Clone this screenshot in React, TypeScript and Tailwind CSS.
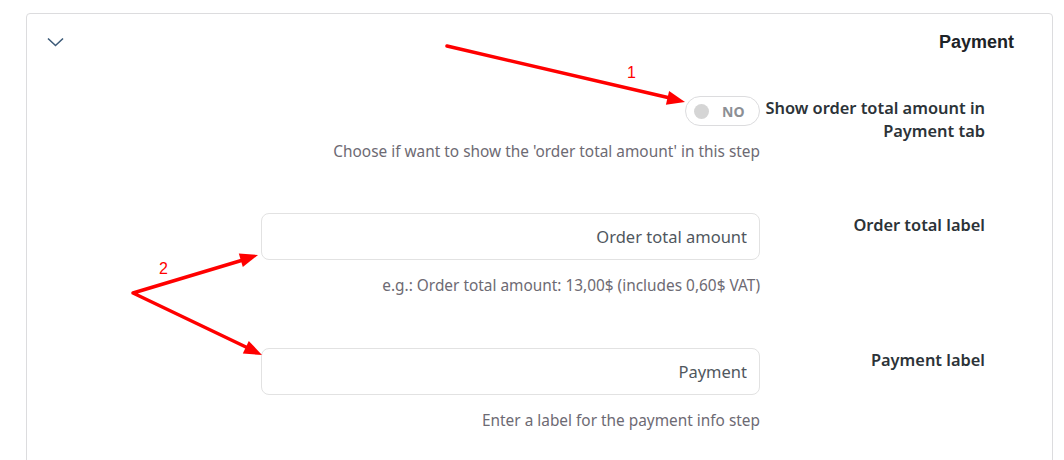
import React from 'react';

const font = "font-['Noto_Sans','Open_Sans',sans-serif]";

const Row: React.FC<{ label: React.ReactNode; children: React.ReactNode; className?: string }> = ({
  label,
  children,
  className = '',
}) => (
  <div className={`flex justify-end gap-[3px] ${className}`}>
    <div className="w-[499px] flex flex-col items-end">{children}</div>
    <div className="w-[222px] text-right text-[16.4px] leading-[23px] font-semibold text-[#2c3338] whitespace-nowrap">
      {label}
    </div>
  </div>
);

const Help: React.FC<{ children: React.ReactNode; className?: string }> = ({ children, className = '' }) => (
  <p className={`text-[15.4px] leading-[20px] text-[#6d6a73] text-right ${className}`}>{children}</p>
);

const TextInput: React.FC<{ value: string }> = ({ value }) => (
  <input
    defaultValue={value}
    className={`w-full h-[47px] rounded-[8px] border border-[#e2e2e2] bg-white pr-[12px] text-right text-[16.5px] text-[#50575e] outline-none ${font}`}
  />
);

// red annotation arrows drawn over the page
const Annotations: React.FC = () => (
  <svg className="absolute inset-0 pointer-events-none" width="1064" height="460">
    <g stroke="#ff0000" strokeWidth="3.5" strokeLinecap="round" fill="none">
      <line x1="447" y1="46" x2="670" y2="98" />
      <polyline points="243,260 133,293 248,348" strokeLinejoin="round" />
    </g>
    <g fill="#ff0000">
      <polygon points="685,102 665.9,104.7 669.1,91.1" />
      <polygon points="258,255 242.8,266.9 238.8,253.5" />
      <polygon points="262,355 242.8,353.5 248.8,340.9" />
    </g>
    <g fill="#ff0000" fontFamily="'Liberation Sans', sans-serif" fontSize="16">
      <text x="627" y="78">1</text>
      <text x="159" y="274">2</text>
    </g>
  </svg>
);

const App: React.FC = () => {
  return (
    <div className={`relative w-[1064px] h-[460px] overflow-hidden bg-white ${font}`}>
      <div className="ml-[26px] mt-[13px] w-[1027px] h-[520px] rounded-[4px] border border-[#dcdcde] bg-white">
        <div className="flex items-center justify-between h-[56px] pl-[20px] pr-[38px]">
          <svg width="17" height="10" viewBox="0 0 17 10" fill="none">
            <path d="M1 1.5 L8.5 8.5 L16 1.5" stroke="#3c5a78" strokeWidth="1.6" />
          </svg>
          <h2 className="font-['Liberation_Sans',Arial,sans-serif] font-bold text-[18px] text-[#1d2327]">Payment</h2>
        </div>

        <div className="pr-[67px] pt-[26px]">
          <Row
            label={
              <>
                Show order total amount in
                <br />
                Payment tab
              </>
            }
          >
            <button className="flex items-center w-[75px] h-[30px] rounded-full border border-[#dcdcde] bg-white pl-[8px]">
              <span className="w-[15px] h-[15px] rounded-full bg-[#d5d5d5]" />
              <span className="ml-[13px] text-[14px] font-bold text-[#8c8f94]">NO</span>
            </button>
            <Help className="mt-[16px]">Choose if want to show the 'order total amount' in this step</Help>
          </Row>

          <Row label="Order total label" className="mt-[51px]">
            <TextInput value="Order total amount" />
            <Help className="mt-[16px]">e.g.: Order total amount: 13,00$ (includes 0,60$ VAT)</Help>
          </Row>

          <Row label="Payment label" className="mt-[52px]">
            <TextInput value="Payment" />
            <Help className="mt-[16px]">Enter a label for the payment info step</Help>
          </Row>
        </div>
      </div>
      <Annotations />
    </div>
  );
};

export default App;
